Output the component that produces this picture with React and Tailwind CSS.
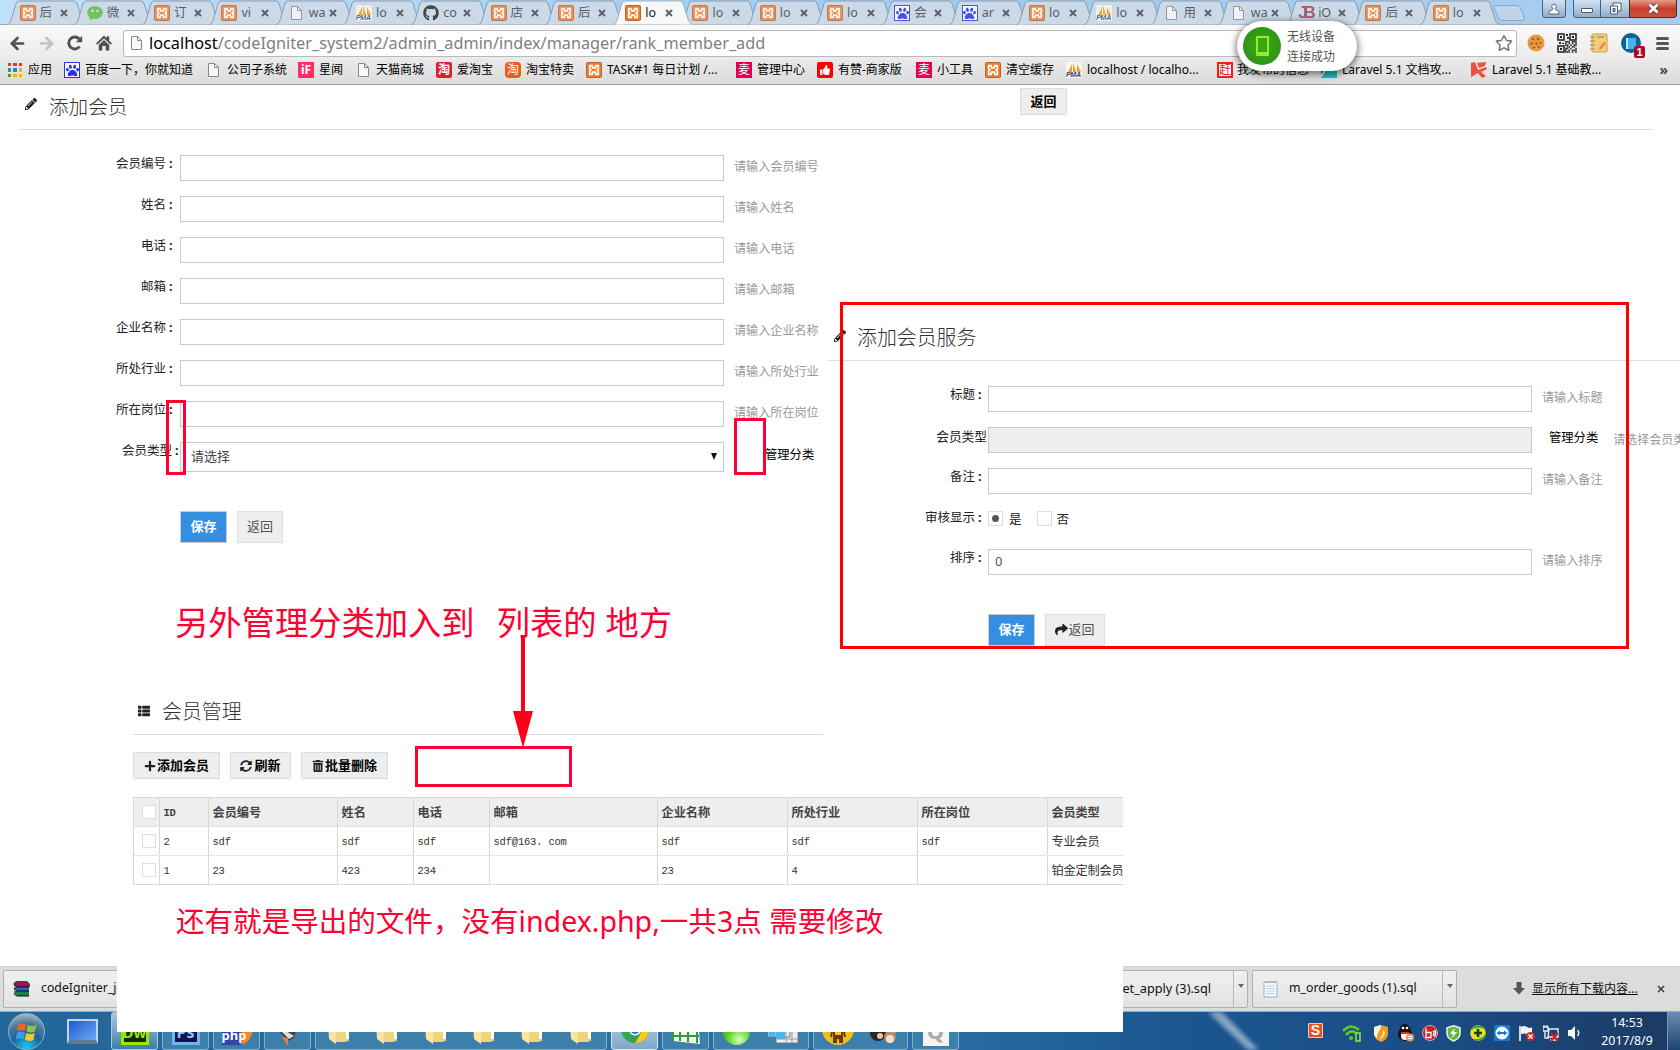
import React from "react";
import { FaPencilAlt, FaThList, FaPlus, FaSyncAlt, FaTrashAlt, FaShare, FaGithub, FaPaw, FaThumbsUp, FaLaravel, FaRegStar } from "react-icons/fa";
import { ArrowLeft, ArrowRight } from "lucide-react";

/* ---------- small icons ---------- */

function Xampp() {
  return (
    <svg width="16" height="16" viewBox="0 0 16 16" className="block shrink-0">
      <rect x="0.5" y="0.5" width="15" height="15" rx="1" fill="#f47c28" stroke="#b5652f" />
      <path d="M3.700 3.700H6.300L6.600 5.800H9.400L9.700 3.700H12.300V6.800L11 8L12.300 9.200V12.300H9.700L9.400 10.200H6.600L6.300 12.300H3.700V9.200L5 8L3.700 6.800Z" fill="#f47c28" stroke="#fff" strokeWidth="1.700" strokeLinejoin="round" />
    </svg>
  );
}
function Page() {
  return (
    <svg width="16" height="16" viewBox="0 0 16 16" className="block shrink-0">
      <path d="M2.5 1.5h6l4 4v9h-10z" fill="#f8f8f8" stroke="#888" />
      <path d="M8.5 1.5v4h4" fill="none" stroke="#888" />
    </svg>
  );
}
function Baidu() {
  return (
    <span className="flex h-4 w-4 shrink-0 items-center justify-center border border-[#2932e1] bg-white">
      <FaPaw className="text-[13px] text-[#2932e1]" />
    </span>
  );
}
function Pma() {
  return (
    <span className="relative block h-4 w-4 shrink-0 bg-[#f6f6f6]">
      <svg width="16" height="10" viewBox="0 0 16 10" className="block">
        <path d="M2 10 6 2v8zM7 10V0l3 10zM11 10V2l4 8z" fill="#f5a01e" />
      </svg>
      <span className="absolute top-[9px] left-0 font-['Liberation_Sans'] text-[7px] leading-[7px] font-bold tracking-[-0.3px] text-[#3b3f70] italic">PMA</span>
    </span>
  );
}
function Wechat() {
  return (
    <svg width="16" height="16" viewBox="0 0 16 16" className="block shrink-0">
      <ellipse cx="8" cy="7.5" rx="7.8" ry="6.6" fill="#58bf3e" />
      <path d="M3 12 2.5 15.500 7 13z" fill="#58bf3e" />
      <circle cx="5.5" cy="5.8" r="1.1" fill="#fff" />
      <circle cx="10.5" cy="5.8" r="1.1" fill="#fff" />
    </svg>
  );
}
function Jb() {
  return <span className="block h-4 w-4 shrink-0 font-['Liberation_Sans'] text-[17px] leading-4 font-bold tracking-[-4px] text-[#98424f]">JB</span>;
}
function Square({ ch, cls }) {
  return <span className={"flex h-4 w-4 shrink-0 items-center justify-center text-[12px] leading-none " + cls}>{ch}</span>;
}
function AppsGrid() {
  const c = ["#e33b2e", "#e33b2e", "#e33b2e", "#3a9c55", "#3b78e7", "#f4b400", "#3a9c55", "#f4b400", "#f4b400"];
  return (
    <span className="grid w-[14px] shrink-0 grid-cols-3 gap-[2px]">
      {c.map((v, i) => <span key={i} className="h-[3.4px]" style={{ background: v }} />)}
    </span>
  );
}

/* ---------- tab strip ---------- */

const tabs = [
  [<Xampp />, "后"], [<Wechat />, "微"], [<Xampp />, "订"], [<Xampp />, "vi"], [<Page />, "wa"], [<Pma />, "lo"],
  [<FaGithub className="text-[16px] text-[#1f2328]" />, "co"], [<Xampp />, "店"], [<Xampp />, "后"], [<Xampp />, "lo"],
  [<Xampp />, "lo"], [<Xampp />, "lo"], [<Xampp />, "lo"], [<Baidu />, "会"], [<Baidu />, "ar"], [<Xampp />, "lo"],
  [<Pma />, "lo"], [<Page />, "用"], [<Page />, "wa"], [<Jb />, "iO"], [<Xampp />, "后"], [<Xampp />, "lo"],
];

function Tab({ icon, text, active }) {
  return (
    <div className={"relative h-6 w-[67.3px] shrink-0 " + (active ? "z-10" : "")}>
      <svg width="82" height="25" viewBox="0 0 82 25" className="absolute top-0 left-0">
        <path d="M0 24.5C3 24 3.5 22 4.500 19L8.500 5C9.500 2 10 1 13 1H66C69 1 69.500 2 70.500 5L75 19C76 22 77 24 80 24.500" fill={active ? "#f7f8f9" : "#ccd9e6"} stroke={active ? "#a5b1bd" : "#8b9cae"} strokeWidth="1" />
      </svg>
      <div className="relative flex h-6 items-center pt-[2px] pl-[12.500px]">
        <span className={"flex w-5 shrink-0 " + (active ? "" : "opacity-80")}>{icon}</span>
        <span className={"w-[20px] shrink-0 text-[12.500px] leading-5 whitespace-nowrap " + (active ? "text-[#222]" : "text-[#555f69]")}>{text}</span>
        <svg width="8" height="8" viewBox="0 0 8 8" className="shrink-0"><path d="M1 1l6 6M7 1 1 7" stroke="#56606a" strokeWidth="1.8" /></svg>
      </div>
    </div>
  );
}

function TabStrip() {
  return (
    <div className="relative flex h-6 shrink-0 bg-gradient-to-r from-[#bfe0fb] via-[#9ccbf3] to-[#a6cdef] pl-[7px]">
      {tabs.map(([icon, text], i) => <Tab key={i} icon={icon} text={text} active={i === 9} />)}
      <svg width="34" height="17" viewBox="0 0 34 17" className="mt-[5px] ml-[5px] shrink-0">
        <path d="M2 .5H24Q26.500.5 27.500 3L31.500 13Q32 15.500 29 15.500H9Q6.500 15.500 5.500 13L1 3Q.5.5 2 .5z" fill="#bfd4e8" stroke="#8fa7be" />
      </svg>
      <div className="ml-auto flex h-[18px] pr-[3px]">
        <div className="mr-[7px] flex w-6 items-center justify-center rounded-b border border-t-0 border-[#4b6078] bg-gradient-to-b from-[#d3e2f0] to-[#8faecb]">
          <svg width="12" height="12" viewBox="0 0 12 12"><path d="M6 1.200a2.200 2.200 0 0 1 1.300 4v1.300L11 8.500V11H1V8.500l3.700-2V5.200A2.200 2.200 0 0 1 6 1.200z" fill="#fff" stroke="#5b6c7d" /></svg>
        </div>
        <div className="flex w-7 items-center justify-center rounded-bl border border-t-0 border-[#4b6078] bg-gradient-to-b from-[#d3e2f0] to-[#8faecb]">
          <span className="mt-1 h-[5px] w-[12px] rounded-[1px] border border-[#4d5b69] bg-white" />
        </div>
        <div className="flex w-7 items-center justify-center border-b border-[#4b6078] bg-gradient-to-b from-[#d3e2f0] to-[#8faecb]">
          <svg width="13" height="13" viewBox="0 0 13 13"><path d="M4 1h8v8H4z" fill="#fff" stroke="#4d5b69" /><path d="M1.500 4h7v8h-7z" fill="#fff" stroke="#4d5b69" /><path d="M4 6.500h2v3H4z" fill="#8faecb" stroke="#4d5b69" /></svg>
        </div>
        <div className="flex w-12 items-center justify-center rounded-br border border-t-0 border-[#5a2422] bg-gradient-to-b from-[#e39a8a] via-[#c73d28] to-[#c9543c]">
          <svg width="13" height="11" viewBox="0 0 13 11"><path d="M2.500 1.500l8 8M10.500 1.500l-8 8" stroke="#5f3a3a" strokeWidth="4.500" /><path d="M2.500 1.500l8 8M10.500 1.500l-8 8" stroke="#fff" strokeWidth="2.800" /></svg>
        </div>
      </div>
    </div>
  );
}

/* ---------- toolbar ---------- */

const qr = ["1110111", "1010101", "1101011", "0110110", "1101001", "1010111", "1110101"];

function Toolbar() {
  return (
    <div className="flex h-9 shrink-0 items-center border-t border-[#9aa7b3] bg-gradient-to-b from-[#f9f9f9] to-[#ebebeb] pt-[1px]">
      <div className="flex w-[123px] shrink-0 items-center pl-[8px] text-[#505050]">
        <ArrowLeft size={19} strokeWidth={3.4} />
        <ArrowRight size={19} strokeWidth={3.4} className="ml-[10px] text-[#c4c4c4]" />
        <svg width="16" height="16" viewBox="0 0 16 16" className="ml-[11px]">
          <path d="M12.600 11.500A6 6 0 1 1 12.400 4.200" fill="none" stroke="#505050" strokeWidth="2.900" />
          <path d="M15.200 .8V7.200H8.800z" fill="#505050" />
        </svg>
        <svg width="16" height="16" viewBox="0 0 16 16" className="ml-[13px]">
          <path d="M8 .5l2.800 2.800V1.200h2.400v4.500L16 8.600l-1.300 1.200L8 3.500 1.300 9.800 0 8.600z" fill="#505050" />
          <path d="M8 5l5.300 5v5.500H9.700V11H6.300v4.500H2.700V10z" fill="#505050" />
        </svg>
      </div>
      <div className="flex h-[27px] w-[1394px] shrink-0 items-center rounded-[3px] border border-[#b9b9b9] bg-white pl-[5px]">
        <Page />
        <span className="ml-[4px] font-['Noto_Sans'] text-[16.25px] leading-none whitespace-nowrap text-[#808080]"><span className="text-black">localhost</span>/codeIgniter_system2/admin_admin/index/manager/rank_member_add</span>
        <FaRegStar className="mr-[3px] ml-auto text-[18px] text-[#777]" />
      </div>
      <div className="flex flex-1 items-center pl-[10px]">
        <svg width="18" height="18" viewBox="0 0 18 18"><circle cx="9" cy="9" r="8.500" fill="#e79a3c" /><g fill="#9c5c22"><circle cx="6" cy="5" r="1.200" /><circle cx="11" cy="5" r="1.200" /><circle cx="4.500" cy="9.500" r="1.200" /><circle cx="9.500" cy="9.500" r="1.200" /><circle cx="13.500" cy="9" r="1.100" /><circle cx="7" cy="13.500" r="1.100" /><circle cx="12" cy="13" r="1.100" /></g></svg>
        <svg width="20" height="20" viewBox="0 0 20 20" className="ml-[12px]">
          <rect width="20" height="20" fill="#e9e9e9" />
          <path d="M1 1h6v6H1zM13 1h6v6h-6zM1 13h6v6H1z" fill="none" stroke="#222" strokeWidth="1.500" />
          <path d="M3 3h2v2H3zM15 3h2v2h-2zM3 15h2v2H3z" fill="#222" />
          {qr.map((r, y) => r.split("").map((v, x) => v === "1" ? <rect key={x + "-" + y} x={8 + x * 1.700} y={8 + y * 1.700} width="1.600" height="1.600" fill="#333" /> : null))}
          <path d="M9 1h2v2H9zM10 4h2v2h-2zM2 9h2v2H2zM5 10h2v1H5z" fill="#333" />
        </svg>
        <svg width="20" height="20" viewBox="0 0 20 20" className="ml-[12px]"><rect x="3" y="1" width="15" height="18" rx="1" fill="#f1cf7b" stroke="#c9a04e" /><path d="M1 4h5M1 8h5M1 12h5M1 16h5" stroke="#a98b55" strokeWidth="1.200" /><path d="M8 4h7" stroke="#9a7d42" /><path d="M10 15l5-6 2 1.500-5 5.500-2 .5z" fill="#e9812d" /></svg>
        <div className="relative ml-[12px] flex h-5 w-5 items-center justify-center rounded-full bg-[#0e6390]">
          <span className="h-[11px] w-[10px] border-l-2 border-[#bfe8fa] bg-[#3db4ea]" />
          <span className="absolute top-[13px] left-[13px] flex h-[12px] w-[11px] items-center justify-center rounded-[2px] bg-[#a80c26] font-['Liberation_Sans'] text-[11px] leading-none font-bold text-white">1</span>
        </div>
        <div className="ml-[15px] flex w-[13px] flex-col gap-[2px]">
          <span className="h-[3px] rounded bg-[#555]" /><span className="h-[3px] rounded bg-[#555]" /><span className="h-[3px] rounded bg-[#555]" />
        </div>
      </div>
    </div>
  );
}

const bookmarks = [
  ["w-[56px]", <AppsGrid />, "gap-[6px]", "应用"],
  ["w-[142px]", <Baidu />, "gap-[5px]", "百度一下，你就知道"],
  ["w-[92px]", <Page />, "gap-[5px]", "公司子系统"],
  ["w-[58px]", <Square ch="iF" cls="bg-[#ff2d63] font-bold text-white" />, "gap-[5px]", "星闻"],
  ["w-[80px]", <Page />, "gap-[4px]", "天猫商城"],
  ["w-[69px]", <Square ch="淘" cls="rounded-[2px] bg-[#dd1f35] font-bold text-white" />, "gap-[5px]", "爱淘宝"],
  ["w-[81px]", <Square ch="淘" cls="rounded-[4px] bg-[#ee5a1c] text-white" />, "gap-[5px]", "淘宝特卖"],
  ["w-[150px]", <Xampp />, "gap-[5px]", "TASK#1 每日计划 /..."],
  ["w-[81px]", <Square ch="麦" cls="bg-[#e4004f] text-white" />, "gap-[5px]", "管理中心"],
  ["w-[99px]", <span className="flex h-4 w-4 shrink-0 items-center justify-center rounded-[2px] bg-[#f00]"><FaThumbsUp className="text-[10px] text-white" /></span>, "gap-[5px]", "有赞-商家版"],
  ["w-[69px]", <Square ch="麦" cls="bg-[#e4004f] text-white" />, "gap-[5px]", "小工具"],
  ["w-[81px]", <Xampp />, "gap-[5px]", "清空缓存"],
  ["w-[151px]", <Pma />, "gap-[5px]", "localhost / localho..."],
  ["w-[104px]", <Square ch="赶" cls="border-2 border-[#f0201c] bg-white text-[#f0201c]" />, "gap-[4px]", "我发布的信息"],
  ["w-[150px]", <svg width="16" height="16" viewBox="0 0 16 16" className="shrink-0"><path d="M0 0h8L0 12z" fill="#233" /><path d="M8 4h8v12H0z" fill="#27bcc4" /></svg>, "gap-[5px]", "Laravel 5.1 文档攻..."],
  ["w-[150px]", <svg width="16" height="16" viewBox="0 0 16 16" className="shrink-0"><path d="M0 1 4 0l3 8 8-3 1 2-6 3 5 4-4 2-4-5-5 3L0 15z" fill="#f04e40" /><path d="M6 1l9-1-1 4-6 2z" fill="#f04e40" /></svg>, "gap-[5px]", "Laravel 5.1 基础教..."],
];

function Bookmarks() {
  return (
    <div className="flex h-[25px] shrink-0 items-center border-b border-[#999] bg-gradient-to-b from-[#e9e9e9] to-[#dcdcdc] pb-[4px] pl-[8px]">
      {bookmarks.map(([w, icon, gap, text], i) => (
        <div key={i} className={"flex h-4 shrink-0 items-center text-[12px] leading-4 whitespace-nowrap text-black " + w + " " + gap}>
          {icon}<span>{text}</span>
        </div>
      ))}
      <span className="ml-auto pr-[12px] text-[14px] leading-4 font-bold text-[#444]">»</span>
    </div>
  );
}

function DevicePopup() {
  return (
    <div className="absolute top-[21px] left-[1237px] z-20 flex h-[50px] w-[120px] items-center rounded-full bg-white pl-[6px] shadow-[0_2px_6px_2px_rgba(0,0,0,0.45)]">
      <div className="flex h-[38px] w-[38px] shrink-0 items-center justify-center rounded-full bg-[radial-gradient(circle,#45a81c,#1f8f12)]">
        <div className="h-5 w-[13px] rounded-[1px] border-2 border-b-[4px] border-[#8cf31c]" />
      </div>
      <div className="mt-[2px] ml-[6px] text-[12px] leading-5 text-[#555]">无线设备<br />连接成功</div>
    </div>
  );
}

/* ---------- page ---------- */

const btn = "flex items-center justify-center border border-[#ddd] bg-[#eee] text-[13px] leading-none";

function Label({ text, cls }) {
  return (
    <div className={"flex shrink-0 items-center justify-end pb-[6px] text-[12.500px] leading-none whitespace-nowrap text-[#222] " + cls}>
      {text}<span className="ml-[3px] w-[4px] font-bold">:</span>
    </div>
  );
}

function Box({ cls, children }) {
  return <div className={"flex h-[26px] w-[544px] shrink-0 items-center border border-[#c8c8c8] " + cls}>{children}</div>;
}

function Hint({ children }) {
  return <div className="ml-[10px] text-[12.100px] leading-none whitespace-nowrap text-[#999]">{children}</div>;
}

function FormRow({ label, labelCls, hint, children }) {
  return (
    <div className="flex h-[41px] items-center">
      <Label text={label} cls={labelCls} />
      <Box cls="bg-white">{children}</Box>
      <Hint>{hint}</Hint>
    </div>
  );
}

const fields = ["会员编号", "姓名", "电话", "邮箱", "企业名称", "所处行业", "所在岗位"];

function MemberForm() {
  return (
    <section className="relative w-[828px] shrink-0 pt-[17px]">
      {fields.map((f) => <FormRow key={f} label={f} labelCls="w-[180px] pr-[7px]" hint={"请输入" + f} />)}
      <div className="flex h-[45px] items-center">
        <Label text="会员类型" cls="w-[180px] pr-[1px] pb-[10px]" />
        <div className="flex h-[30px] w-[544px] shrink-0 items-center justify-between border border-[#c8c8c8] bg-white pr-[6px] pl-[10px] text-[13px] leading-none text-[#444]">
          请选择
          <svg width="6" height="7" viewBox="0 0 6 7"><path d="M0 0h6L3 7z" fill="#111" /></svg>
        </div>
        <div className="ml-[41px] pb-[2px] text-[12.300px] leading-none text-black">管理分类</div>
      </div>
      <div className="flex gap-[10px] pt-[32px] pl-[180px]">
        <div className="flex h-8 w-[47px] items-center justify-center border border-[#ccc] bg-[#368ee0] pb-[2px] text-[13px] leading-none font-bold text-white">保存</div>
        <div className={btn + " h-8 w-[46px] pb-[2px] text-[#555]"}>返回</div>
      </div>
      <p className="pt-[62px] pl-[175px] text-[33.300px] leading-[34px] whitespace-pre text-[#ff0033]">另外管理分类加入到<span className="ml-[22px]">列表的</span><span className="ml-[9px]">地方</span></p>
      <div className="absolute top-[270px] left-[166px] h-[75px] w-5 border-[3px] border-[#ff0033]" />
      <div className="absolute top-[288px] left-[734px] h-[57px] w-8 border-[3px] border-[#ff0033]" />
    </section>
  );
}

function ServiceForm() {
  return (
    <section className="relative w-[852px] overflow-hidden pt-[188px]">
      <div className="flex h-[43px] items-start border-b border-[#ddd] pt-[8px] pl-[6px]">
        <FaPencilAlt className="mt-[4px] text-[12px] text-[#222]" />
        <h2 className="ml-[11px] text-[19.900px] leading-6 font-light text-[#333]">添加会员服务</h2>
      </div>
      <div className="pt-[17px]">
        <FormRow label="标题" labelCls="w-[160px] pr-[6px]" hint="请输入标题" />
        <div className="flex h-[41px] items-center whitespace-nowrap">
          <div className="w-[160px] shrink-0 pr-[1px] pb-[6px] text-right text-[12.700px] leading-none text-[#222]">会员类型</div>
          <Box cls="bg-[#eee]" />
          <span className="ml-[17px] pb-[2px] text-[12.300px] leading-none text-black">管理分类</span>
          <span className="ml-[15px] text-[12px] leading-none text-[#999]">请选择会员类</span>
        </div>
        <FormRow label="备注" labelCls="w-[160px] pr-[6px]" hint="请输入备注" />
        <div className="flex h-[40px] items-center text-[12.500px] leading-none text-[#222]">
          <Label text="审核显示" cls="w-[160px] pr-[6px]" />
          <span className="mb-[5px] flex h-[15px] w-[15px] items-center justify-center border border-[#ddd] bg-white"><span className="h-[7px] w-[7px] rounded-full bg-[#555]" /></span>
          <span className="mb-[1px] ml-[6px]">是</span>
          <span className="mb-[5px] ml-[15px] h-[15px] w-[15px] border border-[#ddd] bg-white" />
          <span className="mb-[1px] ml-[5px]">否</span>
        </div>
        <FormRow label="排序" labelCls="w-[160px] pr-[6px]" hint="请输入排序"><span className="pl-[6px] text-[13px] leading-none text-[#555]">0</span></FormRow>
      </div>
      <div className="flex gap-[10px] pt-[32px] pl-[160px]">
        <div className="flex h-8 w-[47px] items-center justify-center border border-[#ccc] bg-[#368ee0] pb-[2px] text-[13px] leading-none font-bold text-white">保存</div>
        <div className={btn + " h-8 w-[60px] pb-[2px] text-[#555]"}><FaShare className="text-[13px] text-[#222]" />返回</div>
      </div>
      <div className="absolute top-[172px] left-[12px] h-[347px] w-[789px] border-[3px] border-[#f00]" />
    </section>
  );
}

const cols = ["w-[49px]", "w-[129px]", "w-[76px]", "w-[76px]", "w-[168px]", "w-[130px]", "w-[130px]", "w-[130px]", "w-[76px]"];
const head = ["ID", "会员编号", "姓名", "电话", "邮箱", "企业名称", "所处行业", "所在岗位", "会员类型"];
const rows = [
  ["2", "sdf", "sdf", "sdf", "sdf@163. com", "sdf", "sdf", "sdf", "专业会员"],
  ["1", "23", "423", "234", "", "23", "4", "", "铂金定制会员"],
];

function TableRow({ cells, header, last }) {
  return (
    <div className={"flex h-[29px] border-b " + (last ? "border-[#d8d8d8]" : "border-dotted border-[#d0d0d0]") + (header ? " bg-[#eee]" : "")}>
      <div className="flex w-[26px] shrink-0 items-center border-l border-[#d8d8d8] pl-[8px]"><span className="h-[14px] w-[14px] border border-[#ddd] bg-white" /></div>
      {cells.map((c, i) => (
        <div key={i} className={"flex shrink-0 items-center border-l border-[#d8d8d8] pt-[2px] pl-[3.500px] text-[12.200px] leading-none whitespace-nowrap " + cols[i] + (header ? " font-bold text-[#444]" : " text-[#333]") + (i === 8 ? " tracking-[-0.2px]" : "")}>
          <span className={/^[\x20-\x7f]+$/.test(c) ? "font-['Liberation_Mono'] text-[10.500px] tracking-[-0.2px]" : ""}>{c}</span>
        </div>
      ))}
    </div>
  );
}

function MemberList() {
  const b = "flex h-[27px] items-center justify-center gap-[1px] border border-[#ddd] bg-[#eee] text-[13px] leading-none font-bold text-black";
  return (
    <section className="absolute top-[566px] left-[117px] z-10 h-[381px] w-[1006px] overflow-hidden bg-white pl-[16px]">
      <div className="flex h-[84px] w-[690px] items-start border-b border-[#ddd] pt-[49px] pl-[5px]">
        <FaThList className="mt-[5px] text-[12px] text-[#222]" />
        <h2 className="ml-[12px] text-[19.900px] leading-6 font-light text-[#333]">会员管理</h2>
      </div>
      <div className="flex gap-[10px] pt-[17px]">
        <div className={b + " w-[87px]"}><FaPlus className="text-[12px] text-[#222]" />添加会员</div>
        <div className={b + " w-[61px]"}><FaSyncAlt className="mr-[1px] text-[12px] text-[#222]" />刷新</div>
        <div className={b + " w-[87px]"}><FaTrashAlt className="text-[12px] text-[#222]" />批量删除</div>
        <div className="-mt-[6px] ml-[17px] h-[41px] w-[157px] border-[3px] border-[#ff0033]" />
      </div>
      <div className="mt-[10px] w-[990px] overflow-hidden border-t border-[#d8d8d8]">
        <TableRow cells={head} header />
        <TableRow cells={rows[0]} />
        <TableRow cells={rows[1]} last />
      </div>
      <p className="mt-[19px] pl-[43px] text-[28.550px] leading-[34px] whitespace-nowrap text-[#ff0033]">还有就是导出的文件，没有<span className="font-['Noto_Sans']">index.php,</span>一共<span className="font-['Noto_Sans']">3</span>点 需要修改</p>
    </section>
  );
}

/* ---------- download shelf and task bar ---------- */

function NotePad() {
  return <svg width="15" height="18" viewBox="0 0 15 18" className="shrink-0"><path d="M1 2h13v15H1z" fill="#f5f8fa" stroke="#9fb0bb" /><path d="M3 1v2M6 1v2M9 1v2M12 1v2" stroke="#889" /><path d="M3 6h9M3 8.500h9M3 11h9M3 13.500h9" stroke="#bed2de" /></svg>;
}

function Downloads() {
  const item = "flex h-[38px] shrink-0 items-center border border-[#b0b0b0] rounded-[2px] bg-gradient-to-b from-[#f0f0f0] to-[#e2e2e2] text-[12.500px] leading-none text-[#111]";
  return (
    <div className="flex h-[45px] shrink-0 items-center border-t border-[#d0d0d0] bg-[#dcdcdc] pb-[1px] pl-[3px]">
      <div className={item + " w-[240px] pl-[9px]"}>
        <svg width="17" height="18" viewBox="0 0 17 18"><path d="M3 1h11l3 3v3H3L0 4z" fill="#8c1c50" /><path d="M1 7h15v4H4L1 9z" fill="#2864b8" /><path d="M1 11h15v5H4l-3-3z" fill="#1c8040" /><path d="M1 5l3 2h12M1 9l3 2h12M1 14l3 2h12" fill="none" stroke="#111" /></svg>
        <span className="ml-[11px] text-[12.300px]">codeIgniter_jewelry.zip</span>
      </div>
      <div className={item + " ml-[801px] w-[204px]"}>
        <span className="w-[166px] text-right text-[12.700px]">m_market_apply (3).sql</span>
        <span className="ml-auto flex h-full w-[14px] items-start justify-center border-l border-[#bbb] pt-[13px]"><svg width="6" height="4"><path d="M0 0h6L3 4z" fill="#666" /></svg></span>
      </div>
      <div className={item + " ml-[4px] w-[205px] pl-[10px]"}>
        <NotePad />
        <span className="ml-[11px] text-[12.300px]">m_order_goods (1).sql</span>
        <span className="ml-auto flex h-full w-[14px] items-start justify-center border-l border-[#bbb] pt-[13px]"><svg width="6" height="4"><path d="M0 0h6L3 4z" fill="#666" /></svg></span>
      </div>
      <svg width="12" height="13" viewBox="0 0 12 13" className="ml-[56px] shrink-0"><path d="M3.500 0h5v6H12l-6 6.500L0 6h3.500z" fill="#555" /></svg>
      <span className="ml-[7px] text-[12px] leading-4 whitespace-nowrap text-[#111] underline">显示所有下载内容...</span>
      <svg width="8" height="8" viewBox="0 0 8 8" className="mr-[15px] ml-auto"><path d="M1 1l6 6M7 1 1 7" stroke="#444" strokeWidth="1.700" /></svg>
    </div>
  );
}

function Folder() {
  return <svg width="26" height="30" viewBox="0 0 26 30"><path d="M2 4h10l2 3h8v18l-4 1H6l-4-4z" fill="#e8c863" /><path d="M1 6l8 6v16l-7-5z" fill="#f7e69c" /><path d="M19 14h3v9h-3z" fill="#fff" /><path d="M9 14h10v12H9z" fill="#f0d885" opacity=".75" /></svg>;
}

function TaskBtn({ w, active, first, children }) {
  return <div className={"flex h-[38px] shrink-0 items-center justify-around rounded-[3px] border " + (active ? "border-[#d3e6f3] bg-gradient-to-b from-[#b8d3e4] to-[#7fa9c6] " : first ? "border-[#a5cbe0] bg-gradient-to-b from-[#a9c9dc] to-[#3d7fab] " : "border-[#7fb3d3] bg-[#3d7fab] ") + w}>{children}</div>;
}

function Taskbar() {
  return (
    <div className="flex h-[39px] shrink-0 items-start border-t border-[#7fb0d0] bg-[linear-gradient(90deg,#20659b_0%,#2b6ea1_25%,#2b6ea5_55%,#1b5691_70%,#1b4d86_85%,#1c3a63_100%)]">
      <div className="mt-[1px] ml-[8px] flex h-[37px] w-[37px] shrink-0 items-center justify-center rounded-full border border-[#8bb2cd] bg-[radial-gradient(circle_at_50%_95%,#16c9f5_0%,#1d6597_40%,#4d7c9c_65%,#a9bcc8_90%)]">
        <svg width="24" height="24" viewBox="0 0 24 24"><path d="M3 5c3-2 5-2 8-.5L10 11c-3-1.500-5-1-8 0z" fill="#f0622a" /><path d="M12.500 5c3 1.500 6 1.500 9-.5l-1.500 7c-3 1.500-5 1.500-8.500 0z" fill="#8cc63e" /><path d="M2 12.500c3-1 5-1.500 8-.2l-1.300 7C6 18 4 18 .8 19.200z" fill="#3b9de8" /><path d="M11.300 13c3 1.300 5.500 1.300 8.500 0l-1.500 7c-3 1.500-6 1-8.500-.5z" fill="#fcc724" /></svg>
      </div>
      <div className="mt-[7px] ml-[22px] h-[25px] w-[31px] shrink-0 border-2 border-b-4 border-[#c4d5e2] border-b-[#5f7a90] bg-gradient-to-br from-[#2258cc] to-[#6ea8f5]" />
      <div className="ml-[13px] flex gap-[4px]">
        <TaskBtn w="w-[47px]" first><span className="flex h-[28px] w-[28px] items-end justify-center border-[3px] border-[#9ae800] bg-[#12281a] text-[15px] leading-5 font-bold text-[#9ae800]">Dw</span></TaskBtn>
        <TaskBtn w="w-[47px]"><span className="flex h-[28px] w-[28px] items-end justify-center border-[3px] border-[#73b3f0] bg-[#0c1451] text-[16px] leading-5 font-bold text-[#8fc4f5]">Ps</span></TaskBtn>
        <TaskBtn w="w-[47px]"><span className="flex h-[28px] w-[30px] items-end rounded-r-full bg-gradient-to-r from-[#3343a8] from-60% to-[#f28a20] to-70% text-[13px] leading-5 font-bold text-white">php</span></TaskBtn>
        <TaskBtn w="w-[47px]"><svg width="28" height="30" viewBox="0 0 28 30"><path d="M2 12 25 4 20 22l-6 3z" fill="#444" /><path d="M7 12l13 8-5 3-9-9z" fill="#ddd" /><path d="M8 21l6 1v8z" fill="#f47a30" /></svg></TaskBtn>
        <TaskBtn w="w-[292px]"><Folder /><Folder /><Folder /><Folder /><Folder /><Folder /></TaskBtn>
        <TaskBtn w="w-[47px]" active>
          <svg width="30" height="30" viewBox="0 0 30 30"><circle cx="15" cy="13" r="14" fill="#36a352" /><path d="M15 -1a14 14 0 0 1 0 28l6-10z" fill="#fbc916" /><path d="M3 6a14 14 0 0 1 25 2H15z" fill="#e33b2e" /><circle cx="15" cy="13" r="6.500" fill="#fff" /><circle cx="15" cy="13" r="5" fill="#2671d2" /></svg>
        </TaskBtn>
        <TaskBtn w="w-[47px]"><svg width="30" height="30" viewBox="0 0 30 30"><path d="M2 2h25l2 26-27-3z" fill="#edf6e8" /><path d="M2 7h25M2 14h26M2 20h26M9 3v22M17 3v23M26 3v24M2 3v22" stroke="#2f9a3e" strokeWidth="2" /></svg></TaskBtn>
        <TaskBtn w="w-[96px]"><span className="h-[28px] w-[27px] rounded-full bg-[radial-gradient(circle_at_60%_80%,#d6ffc0,#4cc90e_50%)]" /><svg width="32" height="30" viewBox="0 0 32 30"><path d="M1 3h22v18H1zM9 10h22v17H9z" fill="#eee" stroke="#778" /><path d="M9 11h9v12H9zM2 15h6v6H2z" fill="#41bbee" /><path d="M9 23h22M19 11v16M25 11v16" stroke="#99a" /></svg></TaskBtn>
        <TaskBtn w="w-[95px]">
          <svg width="32" height="32" viewBox="0 0 32 32"><circle cx="16" cy="14" r="16" fill="#f2bf1b" /><path d="M11 15h10v8H11z" fill="#653c12" /><path d="M13 17h6v3h-6z" fill="#f2bf1b" /><path d="M12 22v5h2v-4h4v4h2v-5M10 17l-1 5M22 17l1 5" fill="none" stroke="#653c12" strokeWidth="2" /></svg>
          <svg width="30" height="30" viewBox="0 0 30 30"><circle cx="9" cy="17" r="8" fill="#2b2725" /><circle cx="11" cy="20" r="3" fill="#e7c6a4" /><circle cx="23" cy="11" r="7" fill="#69b8e6" /><circle cx="21" cy="21" r="6" fill="#c28b63" /><circle cx="21" cy="23" r="4" fill="#f1dfcd" /></svg>
        </TaskBtn>
        <TaskBtn w="w-[47px]"><span className="mt-[-3px] flex h-[32px] w-[26px] items-end justify-center bg-[#f4f4f4] text-[22px] leading-[32px] font-bold text-[#aaa]">Q</span></TaskBtn>
      </div>
      <svg width="70" height="38" viewBox="0 0 70 38" className="ml-[246px] shrink-0 blur-[2px]"><path d="M3 0H17L54 38H43Z" fill="#a8c1d7" opacity=".75" /></svg>
      <div className="mt-[12px] ml-[33px] flex items-center">
        <span className="-mt-[6px] mr-[19px] flex h-[15px] w-[15px] items-center justify-center rounded-[1px] border border-[#f6c9b8] bg-[#ec4d1d] font-['Liberation_Sans'] text-[14px] leading-none font-bold text-white">S</span>
        <svg width="20" height="17" viewBox="0 0 20 17" className="mr-[12px]"><path d="M1 6Q9-2 17 5M4 10Q9 4 14 8" fill="none" stroke="#5acb24" strokeWidth="2.600" /><circle cx="9" cy="13" r="2" fill="#5acb24" /><path d="M14 8h4v8h-4z" fill="#1b4d86" stroke="#8bef35" strokeWidth="1.500" /></svg>
        <svg width="14" height="17" viewBox="0 0 14 17" className="mr-[9px]"><path d="M7 0l7 2v7q0 5-7 8-7-3-7-8V2z" fill="#f29c22" /><path d="M0 2l7-2v3Q3 8 3 13 0 11 0 9z" fill="#fff4df" /><path d="M9 4q1 6-4 10 5-1 6-6z" fill="#fff1b5" /></svg>
        <svg width="17" height="18" viewBox="0 0 17 18" className="mr-[8px]"><ellipse cx="8" cy="10" rx="7" ry="7" fill="#151515" /><circle cx="8" cy="5" r="5" fill="#151515" /><ellipse cx="8" cy="12" rx="4" ry="4" fill="#fff" /><path d="M4 8h8v2H4z" fill="#e22e28" /><circle cx="6" cy="4" r="1.300" fill="#fff" /><circle cx="10" cy="4" r="1.300" fill="#fff" /><circle cx="13" cy="13.500" r="4" fill="#f79a4b" /><path d="M11 12.500h4M11 14.500h4" stroke="#fff" /></svg>
        <svg width="16" height="16" viewBox="0 0 16 16" className="mr-[8px]"><circle cx="8" cy="8" r="7.500" fill="#c3242c" stroke="#e9a0a0" /><path d="M4 3.500v9h5v-5H4M6.500 10h.1M11 6q2 2 0 5M12.500 5q2.500 3 0 7" fill="none" stroke="#fff" strokeWidth="1.300" /></svg>
        <svg width="15" height="17" viewBox="0 0 15 17" className="mr-[9px]"><path d="M7.500.8l6.500 2v6q0 4.500-6.500 7.200Q1 13.300 1 8.800v-6z" fill="#5fb640" stroke="#eaf7e2" strokeWidth="1.500" /><path d="M8.500 3 4 9h3l-1 4 5-6H8z" fill="#fff" /></svg>
        <svg width="16" height="16" viewBox="0 0 16 16" className="mr-[8px]"><circle cx="8" cy="8" r="7.800" fill="#f0dc2a" /><path d="M1 5a7.800 7.800 0 0 1 13.500-1Q8 1 1 5zM15.500 9a7.800 7.800 0 0 1-13 4.500Q10 16 15.500 9z" fill="#35a92f" /><path d="M8 4v8M4 8h8" stroke="#10420e" strokeWidth="2.600" /></svg>
        <svg width="16" height="16" viewBox="0 0 16 16" className="mr-[9px]"><rect width="16" height="16" rx="1" fill="#1779d1" /><circle cx="8" cy="8" r="6.500" fill="#fff" /><path d="M2.500 8 6 5.500V7h4V5.500L13.500 8 10 10.500V9H6v1.500z" fill="#1779d1" /></svg>
        <svg width="16" height="17" viewBox="0 0 16 17" className="mr-[8px]"><path d="M1 1v15" stroke="#fff" strokeWidth="1.600" /><path d="M2 2q3-2 6 0t5 0v7q-3 1-5 0t-6 0z" fill="#f4f4f4" /><circle cx="11.500" cy="11.500" r="4.500" fill="#d12b27" /><path d="M9.500 9.500l4 4M13.500 9.500l-4 4" stroke="#fff" strokeWidth="1.300" /></svg>
        <svg width="16" height="17" viewBox="0 0 16 17" className="mr-[9px]"><path d="M6 4h9v8H5zM7 15h6M2 6v7h4M0 2h5v4H0zM1 0v2M4 0v2" fill="none" stroke="#e8eef3" strokeWidth="1.400" /><path d="M8 8l7 8M15 8l-7 8" stroke="#e01f1f" strokeWidth="2" /></svg>
        <svg width="13" height="16" viewBox="0 0 13 16"><path d="M0 5h3l4-4v14l-4-4H0z" fill="#f4f6f8" /><path d="M9.500 5q2.500 3 0 6" fill="none" stroke="#e8eef3" strokeWidth="1.400" /></svg>
      </div>
      <div className="mt-[2px] ml-auto w-[80px] text-center text-[12.300px] leading-[18px] text-white">14:53<br />2017/8/9</div>
      <div className="h-[38px] w-[13px] border-l border-[#7d98b4] bg-gradient-to-b from-[#6c8eb0] to-[#1f4371]" />
    </div>
  );
}

export default function App() {
  return (
    <div className="relative flex h-[1050px] w-[1680px] flex-col overflow-hidden bg-white font-['Noto_Sans','Noto_Sans_CJK_SC',sans-serif]">
      <TabStrip />
      <Toolbar />
      <Bookmarks />
      <DevicePopup />
      <main className="relative flex-1 bg-white">
        <header className="mx-[19px] mr-[27px] flex h-[45px] items-start border-b border-[#ddd] pl-[6px]">
          <FaPencilAlt className="mt-[13px] text-[12px] text-[#222]" />
          <h1 className="mt-[10px] ml-[12px] w-[971px] shrink-0 text-[19.600px] leading-6 font-light text-[#333]">添加会员</h1>
          <div className={btn + " mt-[3px] h-[27px] w-[47px] font-bold text-black"}>返回</div>
        </header>
        <div className="flex h-[520px]">
          <MemberForm />
          <ServiceForm />
        </div>
        <MemberList />
        <svg width="20" height="113" viewBox="0 0 20 113" className="absolute top-[550px] left-[513px] z-20"><path d="M8 0h4v76h8L10 113 0 76h8z" fill="#ff0019" /></svg>
      </main>
      <Downloads />
      <Taskbar />
    </div>
  );
}
